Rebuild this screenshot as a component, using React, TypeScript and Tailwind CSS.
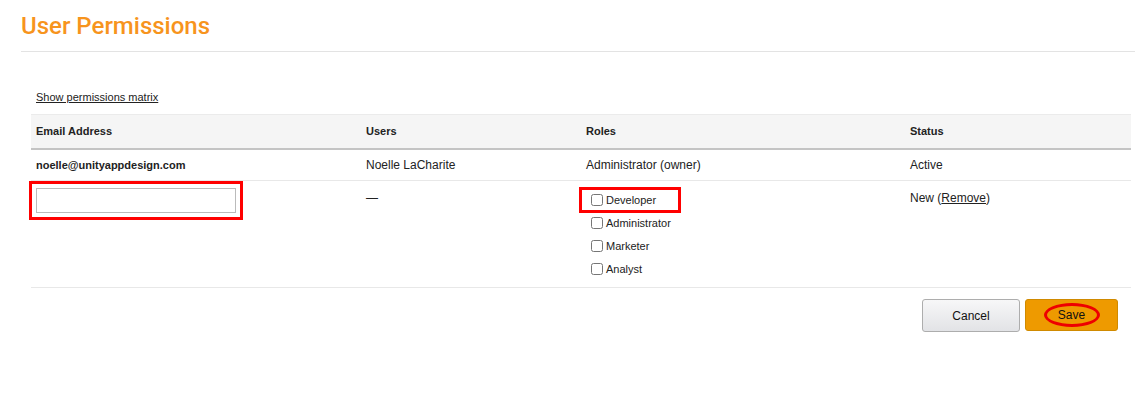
import { useState } from 'react'

const roles = ['Developer', 'Administrator', 'Marketer', 'Analyst']

export default function App() {
  const [checked, setChecked] = useState<string[]>([])
  const [email, setEmail] = useState('')

  const toggle = (role: string) =>
    setChecked((prev) => (prev.includes(role) ? prev.filter((r) => r !== role) : [...prev, role]))

  return (
    <div className="min-h-[399px] bg-white pl-[21px] font-['Liberation_Sans',Arial,sans-serif] text-[#222]">
      <div className="border-b border-[#e3e3e3] pt-[12px] pb-[11px]">
        <h1 className="font-['Roboto',sans-serif] text-[24px] leading-[28px] font-medium text-[#f7941d]">User Permissions</h1>
      </div>

      <div className="mr-[4px] ml-[10px] w-[1100px]">
        <div className="pt-[38px] pb-[10px] pl-[5px] text-[11px] leading-[14px]">
          <a href="#" className="text-[#222] underline">Show permissions matrix</a>
        </div>

        {/* header */}
        <div className="grid h-[36px] grid-cols-[335px_220px_324px_1fr] items-center border-t border-b-2 border-t-[#ebebeb] border-b-[#c4c4c4] bg-[#f5f5f5] text-[11px] font-bold">
          <div className="pl-[5px]">Email Address</div>
          <div>Users</div>
          <div>Roles</div>
          <div>Status</div>
        </div>

        {/* owner row */}
        <div className="grid h-[31px] grid-cols-[335px_220px_324px_1fr] items-center border-b border-[#e8e8e8] text-[12px]">
          <div className="pl-[5px] text-[11px] font-bold">noelle@unityappdesign.com</div>
          <div>Noelle LaCharite</div>
          <div>Administrator (owner)</div>
          <div>Active</div>
        </div>

        {/* new user row */}
        <div className="grid h-[107px] grid-cols-[335px_220px_324px_1fr] border-b border-[#e8e8e8] text-[12px]">
          <div>
            <div className="-ml-[2px] h-[39px] w-[214px] border-[3px] border-[#f00] p-[4px]">
              <input
                value={email}
                onChange={(e) => setEmail(e.target.value)}
                className="h-[25px] w-[200px] border border-[#bbb] bg-white px-1 text-[12px] outline-none"
              />
            </div>
          </div>
          <div className="pt-[8px]">—</div>
          <div className="pt-[6px]">
            <div className="flex flex-col text-[11px]">
              {roles.map((role, i) => (
                <label
                  key={role}
                  className={
                    i === 0
                      ? '-ml-[7px] flex h-[26px] w-[102px] items-center gap-[3px] border-[3px] border-[#f00] pl-[9px]'
                      : 'mt-[-3px] flex h-[26px] items-center gap-[3px] pl-[5px]'
                  }
                >
                  <input
                    type="checkbox"
                    checked={checked.includes(role)}
                    onChange={() => toggle(role)}
                    className="m-0 h-[12px] w-[12px]"
                  />
                  <span>{role}</span>
                </label>
              ))}
            </div>
          </div>
          <div className="pt-[8px]">
            New (<a href="#" className="underline">Remove</a>)
          </div>
        </div>

        <div className="flex justify-end gap-[5px] pt-[11px] pr-[13px]">
          <button className="h-[33px] w-[98px] rounded-[3px] border border-[#adadad] bg-gradient-to-b from-[#f7f7f8] to-[#e2e3e6] text-[12px] text-[#111]">
            Cancel
          </button>
          <button className="relative h-[32px] w-[93px] rounded-[3px] border border-[#d08a00] bg-[#ee9a00] text-[12px] text-[#111]">
            <span className="relative z-10">Save</span>
            <span className="absolute top-[3px] left-[18px] h-[24px] w-[56px] rounded-[50%] border-[3px] border-[#e00]"></span>
          </button>
        </div>
      </div>
    </div>
  )
}
